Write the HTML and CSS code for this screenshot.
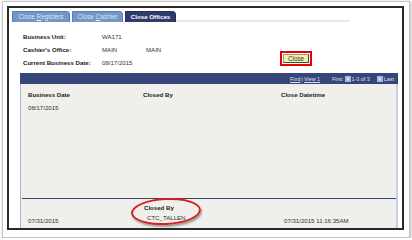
FILE: index.html
```html
<!DOCTYPE html>
<html lang="en">
<head>
    <meta charset="utf-8"/>
    <title>Close Offices</title>
    <link rel="stylesheet" href="styles.css">
</head>
<body>
    <div class="frame">
        <div class="panel">
            <div class="tabs">
                <div class="tab tab-1">Close <u>R</u>egisters</div>
                <div class="tab tab-2">Close <u>C</u>ashier</div>
                <div class="tab tab-3 active">Close Offices</div>
                <div class="tab-line"></div>
            </div>

            <div class="info">
                <div class="fields">
                    <div class="field"><span class="label">Business Unit:</span><span class="value">WA171</span></div>
                    <div class="field"><span class="label">Cashier's Office:</span><span class="value">MAIN</span><span class="value">MAIN</span></div>
                    <div class="field"><span class="label">Current Business Date:</span><span class="value">08/17/2015</span></div>
                </div>
                <div class="close-wrap"><button class="close-btn">Close</button></div>
            </div>

            <div class="grid">
                <div class="grid-head">
                    <span class="link">Find</span><span class="sep">|</span><span class="link">View 1</span>
                    <span class="nav first">First</span>
                    <svg class="nav-icon" width="6" height="6" viewBox="0 0 6 6"><rect width="6" height="6" fill="#a3b6de"/><polygon points="4,1.5 4,4.5 1.8,3" fill="#eef2fa"/></svg>
                    <span class="nav count">1-3 of 3</span>
                    <svg class="nav-icon next" width="6" height="6" viewBox="0 0 6 6"><rect width="6" height="6" fill="#a3b6de"/><polygon points="2,1.5 2,4.5 4.2,3" fill="#eef2fa"/></svg>
                    <span class="nav last">Last</span>
                </div>
                <div class="grid-body">
                    <div class="top-rows">
                        <div class="row heads">
                            <span class="col col-date">Business Date</span>
                            <span class="col col-by">Closed By</span>
                            <span class="col col-time">Close Datetime</span>
                        </div>
                        <div class="row">
                            <span class="col col-date">08/17/2015</span>
                        </div>
                    </div>
                    <div class="divider"></div>
                    <div class="bottom-row">
                        <span class="col col-date low">07/31/2015</span>
                        <div class="col col-by stack">
                            <span class="stack-head">Closed By</span>
                            <span class="stack-value">CTC_TALLEN</span>
                        </div>
                        <span class="col col-time low">07/31/2015 11:16:35AM</span>
                        <div class="callout"></div>
                    </div>
                </div>
            </div>
        </div>
    </div>
</body>
</html>
```

FILE: styles.css
```css
body {
    margin: 0;
    background-color: #ffffff;
    font-family: 'Liberation Sans', Arial, sans-serif;
    color: #333;
}

.frame {
    box-sizing: border-box;
    width: 408px;
    height: 237px;
    margin: 1px 0 0 2px;
    padding: 4px 0 0 4px;
    border: 1px solid #c4c4c4;
    box-shadow: 1px 1px 3px rgba(0, 0, 0, 0.3);
    background-color: #fff;
}

.panel {
    box-sizing: border-box;
    width: 397px;
    height: 224px;
    border: 2px solid #2a2a2a;
    display: flex;
    flex-direction: column;
}

/* tabs */
.tabs {
    display: flex;
    align-items: flex-end;
    gap: 2px;
    padding: 3px 0 0 3px;
}

.tab {
    box-sizing: border-box;
    height: 11px;
    line-height: 10px;
    font-size: 6.4px;
    color: #eef2fa;
    text-align: center;
    background-color: #7396cb;
    border: 1px solid #5a7db6;
    border-bottom: none;
    border-radius: 1px 4px 0 0;
    text-shadow: 0 0 1px #4d6ea6;
}

.tab-1 { width: 58px; }
.tab-2 { width: 51px; }
.tab-3 { width: 51px; }

.tab.active {
    background-color: #2e3b6d;
    border-color: #24305c;
    font-weight: bold;
    font-size: 6.2px;
    color: #ffffff;
    text-shadow: none;
}

.tab-line {
    width: 174px;
    height: 2px;
    margin-left: -2px;
    background-color: #e2eaf7;
}

/* header fields */
.info {
    display: flex;
    margin-top: 8px;
    padding-left: 14px;
}

.field {
    display: flex;
    height: 13px;
    line-height: 13px;
    font-size: 6.1px;
}

.label {
    width: 79px;
    font-weight: bold;
    color: #1a1a1a;
}

.value {
    width: 44px;
    color: #333;
}

.close-wrap {
    margin: 21px 0 0 90px;
    align-self: flex-start;
    border: 2px solid #e60000;
    padding: 1px;
    background-color: #fff;
    display: flex;
}

.close-btn {
    width: 26px;
    height: 9px;
    padding: 0;
    border: 1px solid;
    border-color: #999 #444 #444 #999;
    background-color: #f4efa2;
    font-family: 'Liberation Sans', Arial, sans-serif;
    font-size: 6.3px;
    line-height: 7px;
    color: #333;
}

/* grid */
.grid {
    flex: 1;
    display: flex;
    flex-direction: column;
    margin: 4px 4px 0 11px;
}

.grid-head {
    height: 11px;
    background-color: #37467a;
    display: flex;
    align-items: center;
    justify-content: flex-end;
    padding-right: 4px;
    font-size: 5.4px;
    color: #dde2ee;
}

.link {
    text-decoration: underline;
}

.sep {
    margin: 0 1px;
}

.first {
    margin: 0 2px 0 12px;
}

.count {
    margin: 0 7px 0 1px;
}

.last {
    margin-left: 1px;
}

.grid-body {
    flex: 1;
    display: flex;
    flex-direction: column;
    background-color: #eff0eb;
    border-left: 1px solid #a9b5d4;
    border-right: 2px solid #c6cee6;
}

.top-rows {
    height: 114px;
    padding-top: 6px;
    box-sizing: border-box;
}

.row {
    display: flex;
    height: 10px;
    line-height: 10px;
    font-size: 6.1px;
    margin-bottom: 3px;
}

.col-date {
    width: 115px;
    padding-left: 7px;
}

.col-by {
    width: 138px;
}

.heads {
    font-weight: bold;
    color: #1a1a1a;
}

.divider {
    height: 1px;
    margin-left: 1px;
    background-color: #3a4878;
}

.bottom-row {
    position: relative;
    display: flex;
    font-size: 6.1px;
    line-height: 10px;
}

.low {
    padding-top: 17px;
}

.col-time.low {
    padding-left: 2px;
}

.stack {
    display: flex;
    flex-direction: column;
    padding-top: 4px;
    padding-left: 1px;
}

.stack-head {
    font-weight: bold;
    color: #1a1a1a;
}

.stack-value {
    padding-left: 3px;
}

.callout {
    position: absolute;
    left: 110px;
    top: -1px;
    width: 70px;
    height: 27px;
    box-sizing: border-box;
    border: 2px solid #d61f1f;
    border-radius: 50%;
    transform: rotate(-3deg);
    box-shadow: 1px 2px 2px rgba(0, 0, 0, 0.35);
}
```
